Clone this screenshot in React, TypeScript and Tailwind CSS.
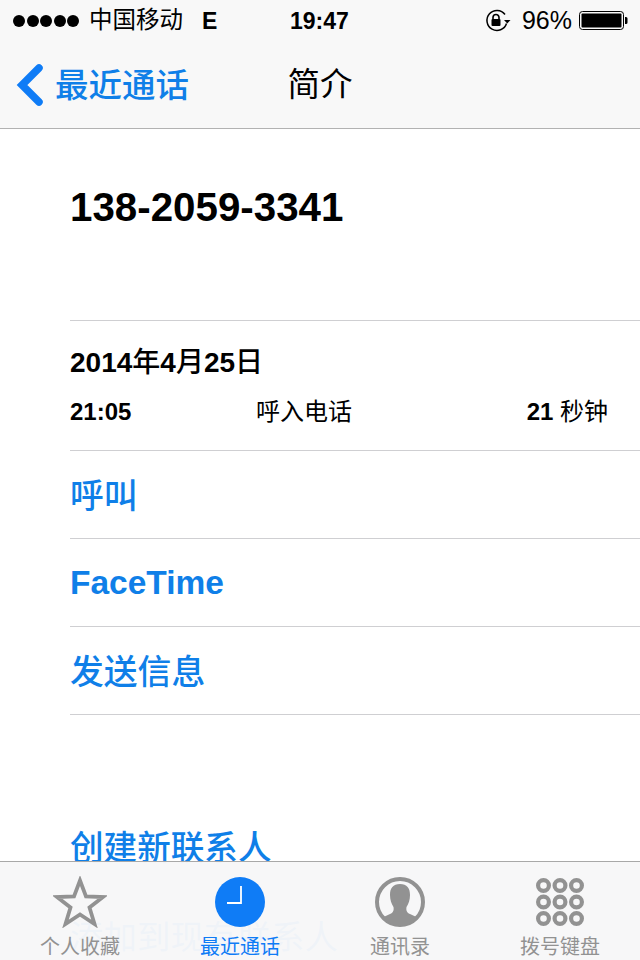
import React from "react";

const font = { fontFamily: '"Liberation Sans", "Noto Sans CJK SC", sans-serif' };

function Row({ children, bold }: { children: React.ReactNode; bold?: boolean }) {
  return (
    <div className={`h-[88px] flex items-center border-b border-[#cfcfd2] text-[#0f7fe8] ${bold ? "text-[33.5px] font-bold pt-[2px]" : "text-[33.8px] font-medium pt-[4px]"}`}>
      {children}
    </div>
  );
}

function Star() {
  return (
    <svg width="54" height="52" viewBox="0 0 54 52" fill="none">
      <path d="M27 4.5 L33 20.5 L50 21 L36.5 31.5 L41.5 48 L27 38.5 L12.5 48 L17.5 31.5 L4 21 L21 20.5 Z" stroke="#929292" strokeWidth="3.8" strokeLinejoin="miter" />
    </svg>
  );
}

function Clock() {
  return (
    <svg width="50" height="50" viewBox="0 0 50 50">
      <circle cx="25" cy="25" r="25" fill="#0f7cf6" />
      <path d="M26 9 V26 H12" fill="none" stroke="#fff" strokeWidth="1.8" />
    </svg>
  );
}

function Person() {
  return (
    <svg width="50" height="50" viewBox="0 0 50 50">
      <circle cx="25" cy="25" r="23" fill="none" stroke="#929292" strokeWidth="4" />
      <path d="M25 7 C32 7 35 11 35 18 C35 23 33.5 27 31.5 30 C31 33 31.5 35.5 35 37 L42.5 40.5 C38.5 45.5 32 48.5 25 48.5 C18 48.5 11.5 45.5 7.5 40.5 L15 37 C18.5 35.5 19 33 18.5 30 C16.5 27 15 23 15 18 C15 11 18 7 25 7 Z" fill="#929292" />
    </svg>
  );
}

function Keypad() {
  const cs = [7.5, 24, 40.5];
  return (
    <svg width="48" height="50" viewBox="0 0 48 50">
      {cs.map((y) =>
        cs.map((x) => <circle key={`${x}-${y}`} cx={x} cy={y + 1} r="5.4" fill="none" stroke="#929292" strokeWidth="4.2" />)
      )}
    </svg>
  );
}

function Tab({ icon, label, active }: { icon: React.ReactNode; label: string; active?: boolean }) {
  return (
    <div className="flex flex-col items-center w-[160px]">
      <div className="h-[50px] flex items-center justify-center">{icon}</div>
      <div className={`mt-[8px] text-[20px] leading-[24px] ${active ? "text-[#0f7cf6]" : "text-[#929292]"}`}>{label}</div>
    </div>
  );
}

export default function App() {
  return (
    <div style={font} className="relative w-[640px] h-[960px] overflow-hidden bg-white text-black">
      <header className="h-[129px] bg-[#f8f8f8] border-b border-[#b2b2b2]">
        <div className="h-[42px] flex items-center pl-[13px] pr-[11px]">
          <div className="flex items-center w-[277px]">
            <div className="flex gap-[1.5px]">
              {[0, 1, 2, 3, 4].map((i) => (
                <span key={i} className="w-[12px] h-[12px] rounded-full bg-black" />
              ))}
            </div>
            <span className="ml-[10px] text-[23.5px]">中国移动</span>
            <span className="ml-[19px] font-bold text-[23px]">E</span>
          </div>
          <span className="font-bold text-[23px]">19:47</span>
          <div className="flex items-center ml-auto">
            <svg width="26" height="24" viewBox="0 0 26 24" fill="none">
              <path d="M20 5.5 A10 10 0 1 0 21.5 14.5" stroke="#000" strokeWidth="1.5" />
              <path d="M19 11 h6.5 l-3.2 3.5 z" fill="#000" />
              <rect x="6.5" y="10" width="9" height="7" rx="1" fill="#000" />
              <path d="M8 10 V8.5 a3 3 0 0 1 6 0 V10" stroke="#000" strokeWidth="1.6" />
            </svg>
            <span className="ml-[11px] text-[25px]">96%</span>
            <svg className="ml-[7px]" width="50" height="20" viewBox="0 0 50 20">
              <rect x="0.5" y="0.5" width="44" height="18" rx="3" fill="#f8f8f8" stroke="#000" />
              <rect x="2.5" y="2.5" width="40" height="14" rx="1" fill="#000" />
              <path d="M46 6 h1 a1.5 1.5 0 0 1 1.5 1.5 v4 a1.5 1.5 0 0 1 -1.5 1.5 h-1 z" fill="#000" />
            </svg>
          </div>
        </div>
        <div className="relative h-[86px] flex items-center justify-center">
          <span className="text-[32.5px]">简介</span>
          <div className="absolute left-[16px] top-[19px] flex items-center text-[#0f7fe8]">
            <svg className="-mt-[3px]" width="28" height="42" viewBox="0 0 28 42" fill="none">
              <path d="M23 4 L6 21 L23 38" stroke="#0f7cf6" strokeWidth="7.5" strokeLinejoin="miter" strokeLinecap="round" />
            </svg>
            <span className="ml-[11px] text-[33.5px] font-medium">最近通话</span>
          </div>
        </div>
      </header>

      <main className="pl-[70px]">
        <div className="h-[192px] border-b border-[#cfcfd2] pt-[56px]">
          <div className="text-[40.3px] leading-[46px] font-bold">138-2059-3341</div>
        </div>
        <div className="h-[130px] border-b border-[#cfcfd2] pt-[25px]">
          <div className="text-[28px] leading-[34px] font-medium">
            <span className="font-bold">2014</span>年<span className="font-bold">4</span>月<span className="font-bold">25</span>日
          </div>
          <div className="mt-[18px] flex items-center text-[24px] leading-[28px] pr-[32px]">
            <span className="w-[186px] font-bold">21:05</span>
            <span className="flex-1">呼入电话</span>
            <span>
              <span className="font-bold">21</span> 秒钟
            </span>
          </div>
        </div>
        <Row>呼叫</Row>
        <Row bold>FaceTime</Row>
        <Row>发送信息</Row>
        <div className="h-[88px]" />
        <div className="h-[88px] flex items-center pt-[4px] text-[#0f7fe8] text-[33.6px] font-medium">创建新联系人</div>
        <div className="h-[88px] flex items-center pt-[6px] text-[#0f7fe8] text-[33.5px]">添加到现有联系人</div>
      </main>

      <nav className="absolute left-0 right-0 bottom-0 h-[99px] bg-[#f7f7f8]/[0.97] border-t border-[#a8a8a8] flex pt-[15px]">
        <Tab icon={<Star />} label="个人收藏" />
        <Tab icon={<Clock />} label="最近通话" active />
        <Tab icon={<Person />} label="通讯录" />
        <Tab icon={<Keypad />} label="拨号键盘" />
      </nav>
    </div>
  );
}
